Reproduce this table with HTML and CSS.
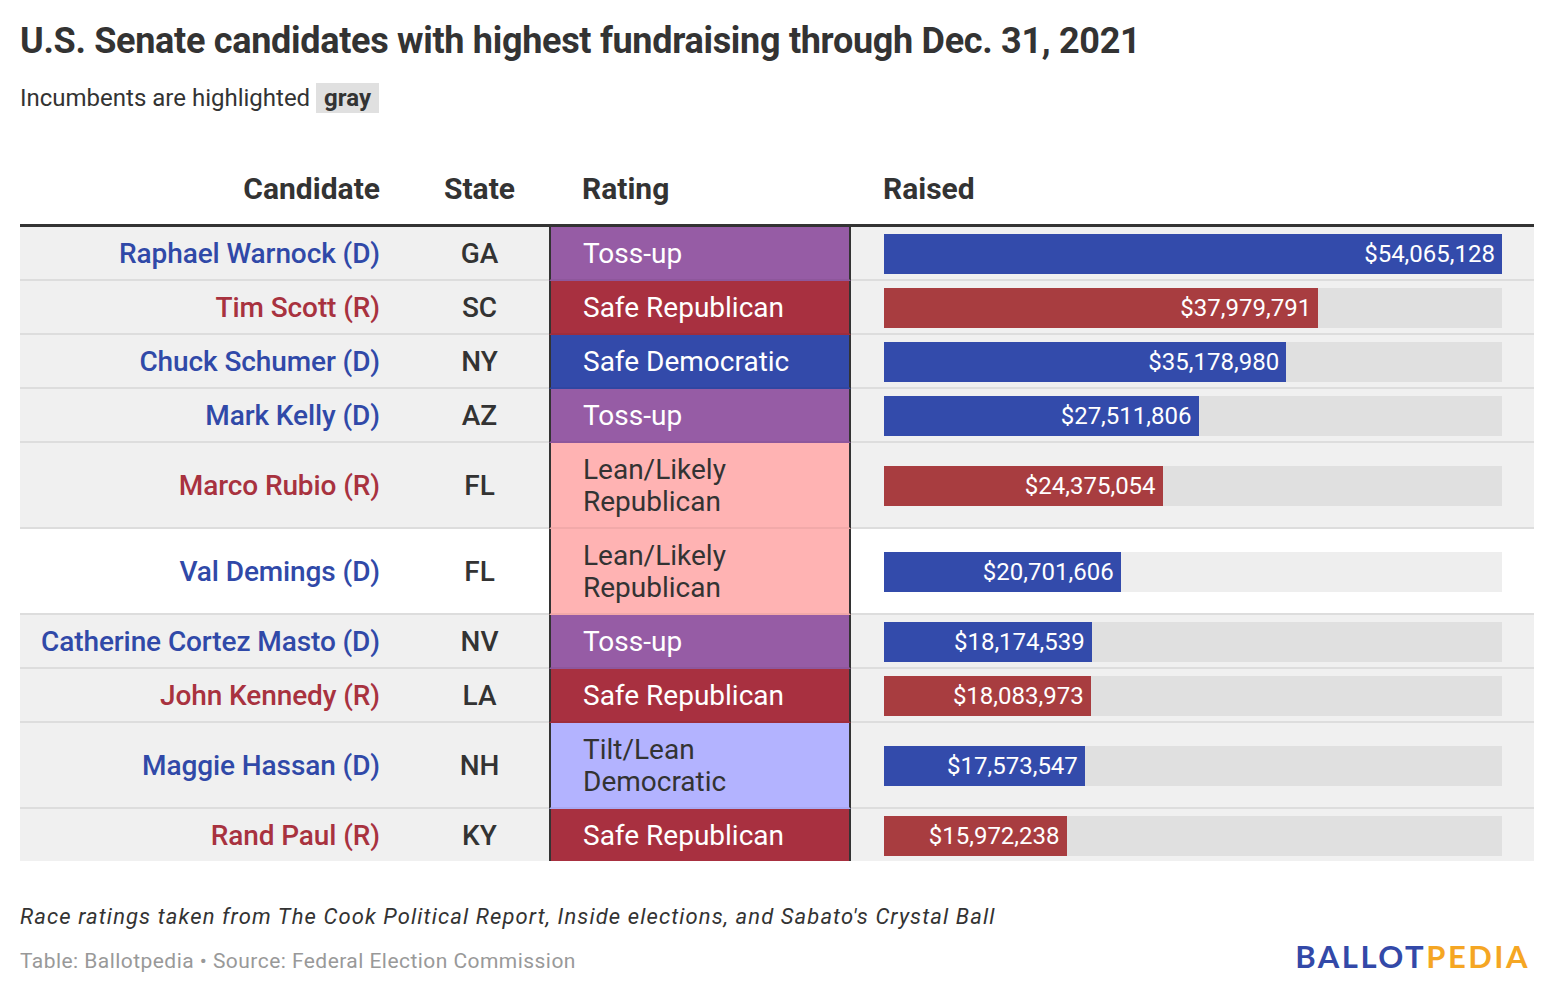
FILE: index.html
```html
<!DOCTYPE html>
<html lang="en">
<head>
<meta charset="utf-8">
<title>U.S. Senate candidates with highest fundraising</title>
<link rel="stylesheet" href="styles.css">
</head>
<body>
<div class="chart">
  <h1 class="title">U.S. Senate candidates with highest fundraising through Dec. 31, 2021</h1>
  <p class="subtitle">Incumbents are highlighted <span class="badge">gray</span></p>

  <div class="table">
    <div class="row head">
      <div class="cell c-name">Candidate</div>
      <div class="cell c-state">State</div>
      <div class="cell c-rating">Rating</div>
      <div class="cell c-raised">Raised</div>
    </div>

    <div class="row inc">
      <div class="cell c-name dem">Raphael Warnock (D)</div>
      <div class="cell c-state">GA</div>
      <div class="cell c-rating toss">Toss-up</div>
      <div class="cell c-raised"><div class="track"><div class="bar bar-dem" style="width:100%"><span>$54,065,128</span></div></div></div>
    </div>

    <div class="row inc">
      <div class="cell c-name rep">Tim Scott (R)</div>
      <div class="cell c-state">SC</div>
      <div class="cell c-rating safe-rep">Safe Republican</div>
      <div class="cell c-raised"><div class="track"><div class="bar bar-rep" style="width:70.25%"><span>$37,979,791</span></div></div></div>
    </div>

    <div class="row inc">
      <div class="cell c-name dem">Chuck Schumer (D)</div>
      <div class="cell c-state">NY</div>
      <div class="cell c-rating safe-dem">Safe Democratic</div>
      <div class="cell c-raised"><div class="track"><div class="bar bar-dem" style="width:65.07%"><span>$35,178,980</span></div></div></div>
    </div>

    <div class="row inc">
      <div class="cell c-name dem">Mark Kelly (D)</div>
      <div class="cell c-state">AZ</div>
      <div class="cell c-rating toss">Toss-up</div>
      <div class="cell c-raised"><div class="track"><div class="bar bar-dem" style="width:50.89%"><span>$27,511,806</span></div></div></div>
    </div>

    <div class="row inc">
      <div class="cell c-name rep">Marco Rubio (R)</div>
      <div class="cell c-state">FL</div>
      <div class="cell c-rating lean-rep">Lean/Likely<br>Republican</div>
      <div class="cell c-raised"><div class="track"><div class="bar bar-rep" style="width:45.08%"><span>$24,375,054</span></div></div></div>
    </div>

    <div class="row">
      <div class="cell c-name dem">Val Demings (D)</div>
      <div class="cell c-state">FL</div>
      <div class="cell c-rating lean-rep">Lean/Likely<br>Republican</div>
      <div class="cell c-raised"><div class="track"><div class="bar bar-dem" style="width:38.29%"><span>$20,701,606</span></div></div></div>
    </div>

    <div class="row inc">
      <div class="cell c-name dem">Catherine Cortez Masto (D)</div>
      <div class="cell c-state">NV</div>
      <div class="cell c-rating toss">Toss-up</div>
      <div class="cell c-raised"><div class="track"><div class="bar bar-dem" style="width:33.62%"><span>$18,174,539</span></div></div></div>
    </div>

    <div class="row inc">
      <div class="cell c-name rep">John Kennedy (R)</div>
      <div class="cell c-state">LA</div>
      <div class="cell c-rating safe-rep">Safe Republican</div>
      <div class="cell c-raised"><div class="track"><div class="bar bar-rep" style="width:33.45%"><span>$18,083,973</span></div></div></div>
    </div>

    <div class="row inc">
      <div class="cell c-name dem">Maggie Hassan (D)</div>
      <div class="cell c-state">NH</div>
      <div class="cell c-rating lean-dem">Tilt/Lean<br>Democratic</div>
      <div class="cell c-raised"><div class="track"><div class="bar bar-dem" style="width:32.50%"><span>$17,573,547</span></div></div></div>
    </div>

    <div class="row inc last">
      <div class="cell c-name rep">Rand Paul (R)</div>
      <div class="cell c-state">KY</div>
      <div class="cell c-rating safe-rep">Safe Republican</div>
      <div class="cell c-raised"><div class="track"><div class="bar bar-rep" style="width:29.54%"><span>$15,972,238</span></div></div></div>
    </div>
  </div>

  <p class="notes">Race ratings taken from The Cook Political Report, Inside elections, and Sabato's Crystal Ball</p>
  <div class="footer">
    <span class="source">Table: Ballotpedia • Source: Federal Election Commission</span>
    <span class="logo"><span class="logo-b">BALLOT</span><span class="logo-p">PEDIA</span></span>
  </div>
</div>
</body>
</html>
```
FILE: styles.css
```css
* { box-sizing: border-box; }

html, body {
  margin: 0;
  padding: 0;
  background: #ffffff;
}

body {
  font-family: Roboto, "Liberation Sans", Arial, sans-serif;
  color: #333333;
}

.chart {
  padding: 20px;
  width: 1554px;
}

.title {
  margin: 0;
  font-size: 36px;
  line-height: 43px;
  font-weight: 700;
  letter-spacing: -0.3px;
  color: #333333;
}

.subtitle {
  margin: 20px 0 0;
  font-size: 24px;
  line-height: 30px;
  font-weight: 400;
  color: #333333;
}

.badge {
  display: inline-block;
  background: #e0e0e0;
  font-weight: 700;
  padding: 0 8px;
}

.table {
  margin-top: 59px;
  width: 1514px;
}

.row {
  display: grid;
  grid-template-columns: 390px 139px 302px 683px;
}

.row.inc { background: #f0f0f0; }

.cell {
  display: flex;
  align-items: center;
  padding: 11px 0 9px;
  font-size: 28px;
  line-height: 32px;
  border-bottom: 2px solid #dddddd;
}

.row.last .cell { border-bottom: none; }

.row.head .cell {
  font-size: 30px;
  font-weight: 700;
  padding: 0 0 18px;
  line-height: 34px;
  border-bottom: 3px solid #333333;
  background: #ffffff;
}

.c-name {
  justify-content: flex-end;
  padding-right: 30px !important;
  font-weight: 500;
  letter-spacing: -0.1px;
}

.row.head .c-name { letter-spacing: 0; }

.c-state {
  justify-content: center;
  font-weight: 500;
}

.c-rating {
  padding-left: 32px !important;
  color: #ffffff;
  border-left: 2px solid #333333;
  border-right: 2px solid #333333;
  border-bottom-color: rgba(0, 0, 0, 0.05) !important;
}

.row.head .c-rating {
  border-left: none;
  border-right: none;
  border-bottom-color: #333333 !important;
  padding-left: 33px !important;
  color: #333333;
}

.c-raised {
  padding-top: 2px !important;
  padding-bottom: 0 !important;
  padding-left: 33px !important;
  padding-right: 32px !important;
}

.row.head .c-raised {
  padding-top: 0 !important;
  padding-left: 32px !important;
  padding-bottom: 18px !important;
}

.dem { color: #3049a8; }
.rep { color: #a8323f; }

.toss { background: #965ca5; }
.safe-rep { background: #a83040; }
.safe-dem { background: #334aaa; }
.lean-rep { background: #ffb3b3; color: #333333; }
.lean-dem { background: #b3b3ff; color: #333333; }

.track {
  width: 100%;
  height: 40px;
  background: rgba(0, 0, 0, 0.065);
}

.bar {
  height: 40px;
  display: flex;
  align-items: center;
  justify-content: flex-end;
  padding-right: 7px;
  color: #ffffff;
  font-size: 24px;
  line-height: 32px;
  font-weight: 400;
  white-space: nowrap;
}

.bar-dem { background: #334bab; }
.bar-rep { background: #a83d40; }

.notes {
  margin: 41px 0 0;
  font-size: 22px;
  line-height: 29px;
  font-style: italic;
  letter-spacing: 1.1px;
  color: #333333;
}

.footer {
  margin-top: 6px;
  display: flex;
  justify-content: space-between;
  align-items: baseline;
  padding-right: 4px;
}

.source {
  font-size: 21px;
  line-height: 28px;
  letter-spacing: 0.45px;
  color: #999999;
}

.logo {
  font-family: Lato, "DejaVu Sans", sans-serif;
  font-weight: 700;
  font-size: 31px;
  letter-spacing: 2.5px;
}

.logo-b { color: #3349a8; }
.logo-p { color: #f5a623; }
```
